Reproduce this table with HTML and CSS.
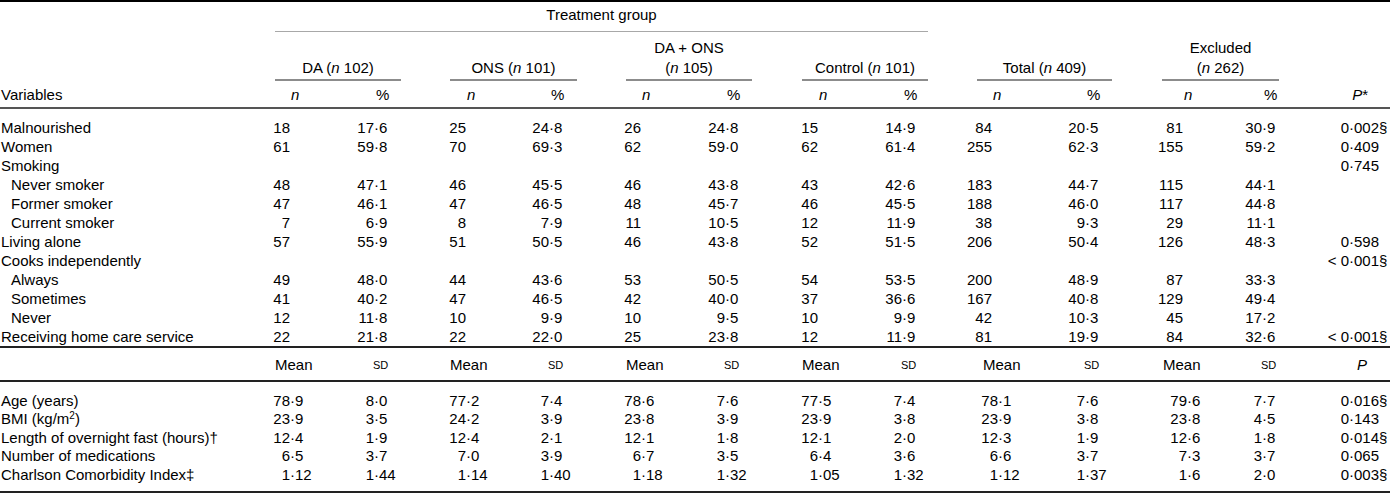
FILE: index.html
```html
<!DOCTYPE html>
<html lang="en">
<head>
<meta charset="utf-8">
<title>Table</title>
<link rel="stylesheet" href="styles.css">
</head>
<body>
<div class="tbl">
  <div class="hd1 g">
    <div></div>
    <div class="tg">Treatment group</div>
  </div>
  <div class="hd2 g">
    <div></div>
    <div class="ttl s2">DA (<i>n</i> 102)</div><div></div>
    <div class="ttl s2">ONS (<i>n</i> 101)</div><div></div>
    <div class="ttl s2">DA + ONS<br>(<i>n</i> 105)</div><div></div>
    <div class="ttl s2">Control (<i>n</i> 101)</div><div></div>
    <div class="ttl s2">Total (<i>n</i> 409)</div><div></div>
    <div class="ttl s2">Excluded<br>(<i>n</i> 262)</div><div></div>
    <div></div>
  </div>
  <div class="hd3 g r">
    <div class="v">Variables</div>
    <div class="hn">n</div><div class="hp">%</div>
    <div class="hn">n</div><div class="hp">%</div>
    <div class="hn">n</div><div class="hp">%</div>
    <div class="hn">n</div><div class="hp">%</div>
    <div class="hn">n</div><div class="hp">%</div>
    <div class="hn">n</div><div class="hp">%</div>
    <div class="hP"><i>P</i>*</div>
  </div>

  <div class="body1">
    <div class="g r">
      <div class="v">Malnourished</div>
      <div class="c"><span class="i">18</span></div><div class="c"><span class="i">17</span>·6</div>
      <div class="c"><span class="i">25</span></div><div class="c"><span class="i">24</span>·8</div>
      <div class="c"><span class="i">26</span></div><div class="c"><span class="i">24</span>·8</div>
      <div class="c"><span class="i">15</span></div><div class="c"><span class="i">14</span>·9</div>
      <div class="c"><span class="i">84</span></div><div class="c"><span class="i">20</span>·5</div>
      <div class="c"><span class="i">81</span></div><div class="c"><span class="i">30</span>·9</div>
      <div class="c"><span class="i">0</span>·002§</div>
    </div>
    <div class="g r">
      <div class="v">Women</div>
      <div class="c"><span class="i">61</span></div><div class="c"><span class="i">59</span>·8</div>
      <div class="c"><span class="i">70</span></div><div class="c"><span class="i">69</span>·3</div>
      <div class="c"><span class="i">62</span></div><div class="c"><span class="i">59</span>·0</div>
      <div class="c"><span class="i">62</span></div><div class="c"><span class="i">61</span>·4</div>
      <div class="c"><span class="i">255</span></div><div class="c"><span class="i">62</span>·3</div>
      <div class="c"><span class="i">155</span></div><div class="c"><span class="i">59</span>·2</div>
      <div class="c"><span class="i">0</span>·409</div>
    </div>
    <div class="g r">
      <div class="v">Smoking</div>
      <div></div><div></div><div></div><div></div><div></div><div></div>
      <div></div><div></div><div></div><div></div><div></div><div></div>
      <div class="c"><span class="i">0</span>·745</div>
    </div>
    <div class="g r">
      <div class="v sub">Never smoker</div>
      <div class="c"><span class="i">48</span></div><div class="c"><span class="i">47</span>·1</div>
      <div class="c"><span class="i">46</span></div><div class="c"><span class="i">45</span>·5</div>
      <div class="c"><span class="i">46</span></div><div class="c"><span class="i">43</span>·8</div>
      <div class="c"><span class="i">43</span></div><div class="c"><span class="i">42</span>·6</div>
      <div class="c"><span class="i">183</span></div><div class="c"><span class="i">44</span>·7</div>
      <div class="c"><span class="i">115</span></div><div class="c"><span class="i">44</span>·1</div>
      <div></div>
    </div>
    <div class="g r">
      <div class="v sub">Former smoker</div>
      <div class="c"><span class="i">47</span></div><div class="c"><span class="i">46</span>·1</div>
      <div class="c"><span class="i">47</span></div><div class="c"><span class="i">46</span>·5</div>
      <div class="c"><span class="i">48</span></div><div class="c"><span class="i">45</span>·7</div>
      <div class="c"><span class="i">46</span></div><div class="c"><span class="i">45</span>·5</div>
      <div class="c"><span class="i">188</span></div><div class="c"><span class="i">46</span>·0</div>
      <div class="c"><span class="i">117</span></div><div class="c"><span class="i">44</span>·8</div>
      <div></div>
    </div>
    <div class="g r">
      <div class="v sub">Current smoker</div>
      <div class="c"><span class="i">7</span></div><div class="c"><span class="i">6</span>·9</div>
      <div class="c"><span class="i">8</span></div><div class="c"><span class="i">7</span>·9</div>
      <div class="c"><span class="i">11</span></div><div class="c"><span class="i">10</span>·5</div>
      <div class="c"><span class="i">12</span></div><div class="c"><span class="i">11</span>·9</div>
      <div class="c"><span class="i">38</span></div><div class="c"><span class="i">9</span>·3</div>
      <div class="c"><span class="i">29</span></div><div class="c"><span class="i">11</span>·1</div>
      <div></div>
    </div>
    <div class="g r">
      <div class="v">Living alone</div>
      <div class="c"><span class="i">57</span></div><div class="c"><span class="i">55</span>·9</div>
      <div class="c"><span class="i">51</span></div><div class="c"><span class="i">50</span>·5</div>
      <div class="c"><span class="i">46</span></div><div class="c"><span class="i">43</span>·8</div>
      <div class="c"><span class="i">52</span></div><div class="c"><span class="i">51</span>·5</div>
      <div class="c"><span class="i">206</span></div><div class="c"><span class="i">50</span>·4</div>
      <div class="c"><span class="i">126</span></div><div class="c"><span class="i">48</span>·3</div>
      <div class="c"><span class="i">0</span>·598</div>
    </div>
    <div class="g r">
      <div class="v">Cooks independently</div>
      <div></div><div></div><div></div><div></div><div></div><div></div>
      <div></div><div></div><div></div><div></div><div></div><div></div>
      <div class="c"><span class="i">&lt; 0</span>·001§</div>
    </div>
    <div class="g r">
      <div class="v sub">Always</div>
      <div class="c"><span class="i">49</span></div><div class="c"><span class="i">48</span>·0</div>
      <div class="c"><span class="i">44</span></div><div class="c"><span class="i">43</span>·6</div>
      <div class="c"><span class="i">53</span></div><div class="c"><span class="i">50</span>·5</div>
      <div class="c"><span class="i">54</span></div><div class="c"><span class="i">53</span>·5</div>
      <div class="c"><span class="i">200</span></div><div class="c"><span class="i">48</span>·9</div>
      <div class="c"><span class="i">87</span></div><div class="c"><span class="i">33</span>·3</div>
      <div></div>
    </div>
    <div class="g r">
      <div class="v sub">Sometimes</div>
      <div class="c"><span class="i">41</span></div><div class="c"><span class="i">40</span>·2</div>
      <div class="c"><span class="i">47</span></div><div class="c"><span class="i">46</span>·5</div>
      <div class="c"><span class="i">42</span></div><div class="c"><span class="i">40</span>·0</div>
      <div class="c"><span class="i">37</span></div><div class="c"><span class="i">36</span>·6</div>
      <div class="c"><span class="i">167</span></div><div class="c"><span class="i">40</span>·8</div>
      <div class="c"><span class="i">129</span></div><div class="c"><span class="i">49</span>·4</div>
      <div></div>
    </div>
    <div class="g r">
      <div class="v sub">Never</div>
      <div class="c"><span class="i">12</span></div><div class="c"><span class="i">11</span>·8</div>
      <div class="c"><span class="i">10</span></div><div class="c"><span class="i">9</span>·9</div>
      <div class="c"><span class="i">10</span></div><div class="c"><span class="i">9</span>·5</div>
      <div class="c"><span class="i">10</span></div><div class="c"><span class="i">9</span>·9</div>
      <div class="c"><span class="i">42</span></div><div class="c"><span class="i">10</span>·3</div>
      <div class="c"><span class="i">45</span></div><div class="c"><span class="i">17</span>·2</div>
      <div></div>
    </div>
    <div class="g r">
      <div class="v">Receiving home care service</div>
      <div class="c"><span class="i">22</span></div><div class="c"><span class="i">21</span>·8</div>
      <div class="c"><span class="i">22</span></div><div class="c"><span class="i">22</span>·0</div>
      <div class="c"><span class="i">25</span></div><div class="c"><span class="i">23</span>·8</div>
      <div class="c"><span class="i">12</span></div><div class="c"><span class="i">11</span>·9</div>
      <div class="c"><span class="i">81</span></div><div class="c"><span class="i">19</span>·9</div>
      <div class="c"><span class="i">84</span></div><div class="c"><span class="i">32</span>·6</div>
      <div class="c"><span class="i">&lt; 0</span>·001§</div>
    </div>
  </div>

  <div class="hd4 g r m">
    <div></div>
    <div class="hm">Mean</div><div class="hs">sd</div>
    <div class="hm">Mean</div><div class="hs">sd</div>
    <div class="hm">Mean</div><div class="hs">sd</div>
    <div class="hm">Mean</div><div class="hs">sd</div>
    <div class="hm">Mean</div><div class="hs">sd</div>
    <div class="hm">Mean</div><div class="hs">sd</div>
    <div class="hP2"><i>P</i></div>
  </div>

  <div class="body2">
    <div class="g r m">
      <div class="v">Age (years)</div>
      <div class="c"><span class="i">78</span>·9</div><div class="c"><span class="i">8</span>·0</div>
      <div class="c"><span class="i">77</span>·2</div><div class="c"><span class="i">7</span>·4</div>
      <div class="c"><span class="i">78</span>·6</div><div class="c"><span class="i">7</span>·6</div>
      <div class="c"><span class="i">77</span>·5</div><div class="c"><span class="i">7</span>·4</div>
      <div class="c"><span class="i">78</span>·1</div><div class="c"><span class="i">7</span>·6</div>
      <div class="c"><span class="i">79</span>·6</div><div class="c"><span class="i">7</span>·7</div>
      <div class="c"><span class="i">0</span>·016§</div>
    </div>
    <div class="g r m">
      <div class="v">BMI (kg/m<sup>2</sup>)</div>
      <div class="c"><span class="i">23</span>·9</div><div class="c"><span class="i">3</span>·5</div>
      <div class="c"><span class="i">24</span>·2</div><div class="c"><span class="i">3</span>·9</div>
      <div class="c"><span class="i">23</span>·8</div><div class="c"><span class="i">3</span>·9</div>
      <div class="c"><span class="i">23</span>·9</div><div class="c"><span class="i">3</span>·8</div>
      <div class="c"><span class="i">23</span>·9</div><div class="c"><span class="i">3</span>·8</div>
      <div class="c"><span class="i">23</span>·8</div><div class="c"><span class="i">4</span>·5</div>
      <div class="c"><span class="i">0</span>·143</div>
    </div>
    <div class="g r m">
      <div class="v">Length of overnight fast (hours)†</div>
      <div class="c"><span class="i">12</span>·4</div><div class="c"><span class="i">1</span>·9</div>
      <div class="c"><span class="i">12</span>·4</div><div class="c"><span class="i">2</span>·1</div>
      <div class="c"><span class="i">12</span>·1</div><div class="c"><span class="i">1</span>·8</div>
      <div class="c"><span class="i">12</span>·1</div><div class="c"><span class="i">2</span>·0</div>
      <div class="c"><span class="i">12</span>·3</div><div class="c"><span class="i">1</span>·9</div>
      <div class="c"><span class="i">12</span>·6</div><div class="c"><span class="i">1</span>·8</div>
      <div class="c"><span class="i">0</span>·014§</div>
    </div>
    <div class="g r m">
      <div class="v">Number of medications</div>
      <div class="c"><span class="i">6</span>·5</div><div class="c"><span class="i">3</span>·7</div>
      <div class="c"><span class="i">7</span>·0</div><div class="c"><span class="i">3</span>·9</div>
      <div class="c"><span class="i">6</span>·7</div><div class="c"><span class="i">3</span>·5</div>
      <div class="c"><span class="i">6</span>·4</div><div class="c"><span class="i">3</span>·6</div>
      <div class="c"><span class="i">6</span>·6</div><div class="c"><span class="i">3</span>·7</div>
      <div class="c"><span class="i">7</span>·3</div><div class="c"><span class="i">3</span>·7</div>
      <div class="c"><span class="i">0</span>·065</div>
    </div>
    <div class="g r m">
      <div class="v">Charlson Comorbidity Index‡</div>
      <div class="c"><span class="i">1</span>·12</div><div class="c"><span class="i">1</span>·44</div>
      <div class="c"><span class="i">1</span>·14</div><div class="c"><span class="i">1</span>·40</div>
      <div class="c"><span class="i">1</span>·18</div><div class="c"><span class="i">1</span>·32</div>
      <div class="c"><span class="i">1</span>·05</div><div class="c"><span class="i">1</span>·32</div>
      <div class="c"><span class="i">1</span>·12</div><div class="c"><span class="i">1</span>·37</div>
      <div class="c"><span class="i">1</span>·6</div><div class="c"><span class="i">2</span>·0</div>
      <div class="c"><span class="i">0</span>·003§</div>
    </div>
  </div>
</div>
</body>
</html>
```
FILE: styles.css
```css
html, body {
  margin: 0;
  padding: 0;
  background: #fff;
}
body {
  font-family: "Liberation Sans", Arial, Helvetica, sans-serif;
  font-size: 15px;
  color: #000;
}
.tbl {
  width: 1390px;
  border-top: 2px solid #000;
  display: flex;
  flex-direction: column;
}
.g {
  display: grid;
  grid-template-columns: 275px 57px 69px 49px 57px 70px 49px 57px 69px 50px 57px 69px 49px 63px 72px 50px 53px 64px 41px 70px;
}
/* percentage / sd cells span their track plus the gap track after it */
.r > :nth-child(2n+3):not(:last-child) {
  grid-column: span 2;
}
.r > :nth-child(2)  { --ir: 15px; --mo: 0px; }
.r > :nth-child(3)  { --ir: 42px; }
.r > :nth-child(4)  { --ir: 16px; --mo: 0px; }
.r > :nth-child(5)  { --ir: 42px; }
.r > :nth-child(6)  { --ir: 15px; --mo: 0px; }
.r > :nth-child(7)  { --ir: 42px; }
.r > :nth-child(8)  { --ir: 16px; --mo: 0px; }
.r > :nth-child(9)  { --ir: 43px; }
.r > :nth-child(10) { --ir: 15px; --mo: 6px; }
.r > :nth-child(11) { --ir: 45px; }
.r > :nth-child(12) { --ir: 21px; --mo: 1px; }
.r > :nth-child(13) { --ir: 47px; }
.r > :nth-child(14) { --ir: 29px; }
/* mean columns of Total and Excluded sit a little further right */
.m > :nth-child(10) { --ir: 21px; }
.m > :nth-child(12) { --ir: 25px; }

.hd1 {
  padding-top: 4px;
}
.tg {
  grid-column: 2 / 13;
  text-align: center;
  line-height: 18.5px;
  padding-bottom: 6px;
  border-bottom: 1px solid #a8a8a8;
}
.hd2 {
  padding-top: 6px;
  align-items: end;
}
.s2 {
  grid-column: span 2;
}
.ttl {
  text-align: center;
  line-height: 20px;
  padding-bottom: 1px;
  border-bottom: 2px solid #8c8c8c;
}
.hd3 {
  padding-top: 5px;
  padding-bottom: 3px;
  border-bottom: 2px solid #555;
  line-height: 18.5px;
}
.hn {
  font-style: italic;
  padding-left: calc(var(--ir) + 1px);
}
.hp {
  padding-left: calc(var(--ir) + 2px);
}
.hP {
  text-align: right;
  padding-right: 22px;
}
.v {
  padding-left: 1px;
  white-space: nowrap;
}
.v.sub {
  padding-left: 11px;
}
.body1 {
  padding-top: 9px;
  border-bottom: 2px solid #222;
}
.body1 .r {
  height: 19px;
  line-height: 19px;
}
.body2 .r {
  height: 18.5px;
  line-height: 18.5px;
}
.c {
  display: flex;
  white-space: nowrap;
}
.c .i {
  flex: none;
  width: var(--ir);
  display: flex;
  justify-content: flex-end;
  white-space: pre;
}
.hd4 {
  padding-top: 8px;
  padding-bottom: 5px;
  border-bottom: 2px solid #222;
  line-height: 18.5px;
}
.hm {
  padding-left: var(--mo);
}
.hs {
  padding-left: calc(var(--ir) - 1px);
  font-size: 11px;
  text-transform: uppercase;
}
.hP2 {
  text-align: right;
  padding-right: 23px;
}
.body2 {
  padding-top: 10px;
  padding-bottom: 7px;
  border-bottom: 2px solid #222;
}
sup {
  font-size: 10px;
  line-height: 0;
  vertical-align: 5px;
}
```
